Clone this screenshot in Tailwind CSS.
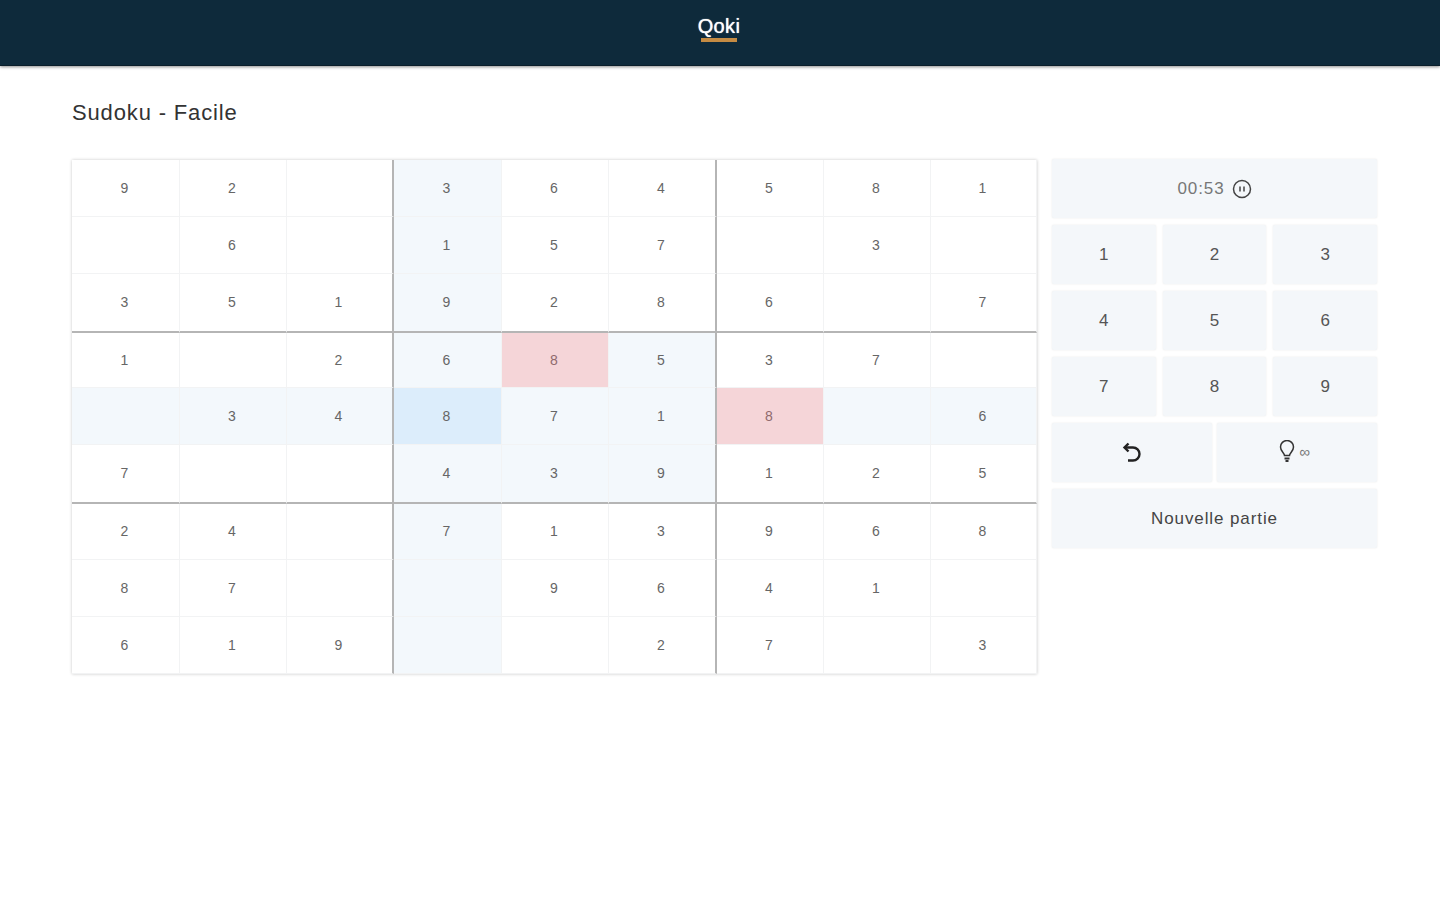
<!DOCTYPE html>
<html lang="fr">
<head>
    <meta charset="UTF-8">
    <title>Sudoku - Facile</title>
    <script src="https://cdn.jsdelivr.net/npm/@tailwindcss/browser@4"></script>
</head>
<body class="bg-white font-['Liberation_Sans',Arial,sans-serif] min-h-screen">

    <!-- header -->
    <header class="h-[66px] bg-[#0e2a3b] border-b border-[#0a1e2a] shadow-[0_1px_3px_rgba(0,0,0,0.45)] flex flex-col items-center pt-[14px] pr-[2px]">
        <a class="block text-white text-[20px] leading-[24px] tracking-[0.4px] [text-shadow:0_0_1px_white]">Qoki</a>
        <span class="block w-[36px] h-[4px] bg-[#c58b43]"></span>
    </header>

    <main class="pl-[72px] pr-[63px]">
        <h1 class="text-[22px] leading-[28px] text-[#333] tracking-[0.85px] pt-[33px] pb-[32px]">Sudoku - Facile</h1>

        <div class="flex gap-[15px] items-start">
            <!-- grille -->
            <div class="w-[965px] h-[514px] mt-px grid grid-cols-[108px_107px_107px_108px_107px_108px_107px_107px_106px] grid-rows-[57px_57px_59px_55px_57px_59px_56px_57px_57px] text-[14px] text-[#666] shadow-[0_0_3px_rgba(0,0,0,0.22)] [&>div]:flex [&>div]:items-center [&>div]:justify-center [&>div]:pr-[2px] [&>div]:border-r [&>div]:border-b [&>div]:border-[#f2f3f4]">
                <!-- ligne 1 -->
                <div>9</div><div>2</div><div class="border-r-2! border-r-[#b5b5b5]!"></div><div class="bg-[#f3f8fc]">3</div><div>6</div><div class="border-r-2! border-r-[#b5b5b5]!">4</div><div>5</div><div>8</div><div>1</div>
                <!-- ligne 2 -->
                <div></div><div>6</div><div class="border-r-2! border-r-[#b5b5b5]!"></div><div class="bg-[#f3f8fc]">1</div><div>5</div><div class="border-r-2! border-r-[#b5b5b5]!">7</div><div></div><div>3</div><div></div>
                <!-- ligne 3 -->
                <div class="border-b-2! border-b-[#b5b5b5]!">3</div><div class="border-b-2! border-b-[#b5b5b5]!">5</div><div class="border-b-2! border-b-[#b5b5b5]! border-r-2! border-r-[#b5b5b5]!">1</div><div class="border-b-2! border-b-[#b5b5b5]! bg-[#f3f8fc]">9</div><div class="border-b-2! border-b-[#b5b5b5]!">2</div><div class="border-b-2! border-b-[#b5b5b5]! border-r-2! border-r-[#b5b5b5]!">8</div><div class="border-b-2! border-b-[#b5b5b5]!">6</div><div class="border-b-2! border-b-[#b5b5b5]!"></div><div class="border-b-2! border-b-[#b5b5b5]!">7</div>
                <!-- ligne 4 -->
                <div>1</div><div></div><div class="border-r-2! border-r-[#b5b5b5]!">2</div><div class="bg-[#f3f8fc]">6</div><div class="bg-[#f5d5d8] text-[#8f6a6d]">8</div><div class="bg-[#f3f8fc] border-r-2! border-r-[#b5b5b5]!">5</div><div>3</div><div>7</div><div></div>
                <!-- ligne 5 -->
                <div class="bg-[#f3f8fc]"></div><div class="bg-[#f3f8fc]">3</div><div class="bg-[#f3f8fc] border-r-2! border-r-[#b5b5b5]!">4</div><div class="bg-[#dcedfb]">8</div><div class="bg-[#f3f8fc]">7</div><div class="bg-[#f3f8fc] border-r-2! border-r-[#b5b5b5]!">1</div><div class="bg-[#f5d5d8] text-[#8f6a6d]">8</div><div class="bg-[#f3f8fc]"></div><div class="bg-[#f3f8fc]">6</div>
                <!-- ligne 6 -->
                <div class="border-b-2! border-b-[#b5b5b5]!">7</div><div class="border-b-2! border-b-[#b5b5b5]!"></div><div class="border-b-2! border-b-[#b5b5b5]! border-r-2! border-r-[#b5b5b5]!"></div><div class="border-b-2! border-b-[#b5b5b5]! bg-[#f3f8fc]">4</div><div class="border-b-2! border-b-[#b5b5b5]! bg-[#f3f8fc]">3</div><div class="border-b-2! border-b-[#b5b5b5]! border-r-2! border-r-[#b5b5b5]! bg-[#f3f8fc]">9</div><div class="border-b-2! border-b-[#b5b5b5]!">1</div><div class="border-b-2! border-b-[#b5b5b5]!">2</div><div class="border-b-2! border-b-[#b5b5b5]!">5</div>
                <!-- ligne 7 -->
                <div>2</div><div>4</div><div class="border-r-2! border-r-[#b5b5b5]!"></div><div class="bg-[#f3f8fc]">7</div><div>1</div><div class="border-r-2! border-r-[#b5b5b5]!">3</div><div>9</div><div>6</div><div>8</div>
                <!-- ligne 8 -->
                <div>8</div><div>7</div><div class="border-r-2! border-r-[#b5b5b5]!"></div><div class="bg-[#f3f8fc]"></div><div>9</div><div class="border-r-2! border-r-[#b5b5b5]!">6</div><div>4</div><div>1</div><div></div>
                <!-- ligne 9 -->
                <div>6</div><div>1</div><div class="border-r-2! border-r-[#b5b5b5]!">9</div><div class="bg-[#f3f8fc]"></div><div></div><div class="border-r-2! border-r-[#b5b5b5]!">2</div><div>7</div><div></div><div>3</div>
            </div>

            <!-- commandes -->
            <div class="w-[325px] flex flex-col gap-[7px] text-[#555] [&_button]:bg-[#f4f7fa] [&_button]:rounded-[2px] [&_button]:h-[59px] [&_button]:shadow-[0_0_2px_rgba(0,0,0,0.1)] [&_button]:flex [&_button]:items-center [&_button]:justify-center">
                <button class="w-full gap-[7px] text-[17px] text-[#777] tracking-[0.9px]">
                    00:53
                    <svg class="w-[20px] h-[20px]" viewBox="0 0 20 20" fill="none" stroke="#444" stroke-width="1.5"><circle cx="10" cy="10" r="8.500"/><path d="M8 7.500v5M12 7.500v5"/></svg>
                </button>
                <div class="grid grid-cols-3 gap-[7px] text-[17px]">
                    <button>1</button><button>2</button><button>3</button>
                    <button>4</button><button>5</button><button>6</button>
                    <button>7</button><button>8</button><button>9</button>
                </div>
                <div class="grid grid-cols-2 gap-[5px]">
                    <button>
                        <svg class="w-[20px] h-[22px] -mt-[2px]" viewBox="0 0 20 22" fill="none" stroke="#222" stroke-width="2.400"><path d="M3 6.500h8a6.500 6.500 0 0 1 0 13H6"/><path d="M6.500 2.500 2.500 6.500l4 4"/></svg>
                    </button>
                    <button class="gap-[3px] pr-[6px] pb-[2px]">
                        <svg class="w-[18px] h-[23px]" viewBox="0 0 18 23" fill="none" stroke="#333" stroke-width="1.500"><path d="M6.500 15.500c0-2.500-4-4-4-8.500a6.500 6.500 0 0 1 13 0c0 4.500-4 6-4 8.500z"/><path d="M6.500 18.500h5M7.500 21h3" stroke-width="2"/></svg>
                        <span class="text-[15px] leading-none text-[#777]">∞</span>
                    </button>
                </div>
                <button class="w-full text-[17px] text-[#444] tracking-[0.9px] pt-[1px]">Nouvelle partie</button>
            </div>
        </div>
    </main>
</body>
</html>
